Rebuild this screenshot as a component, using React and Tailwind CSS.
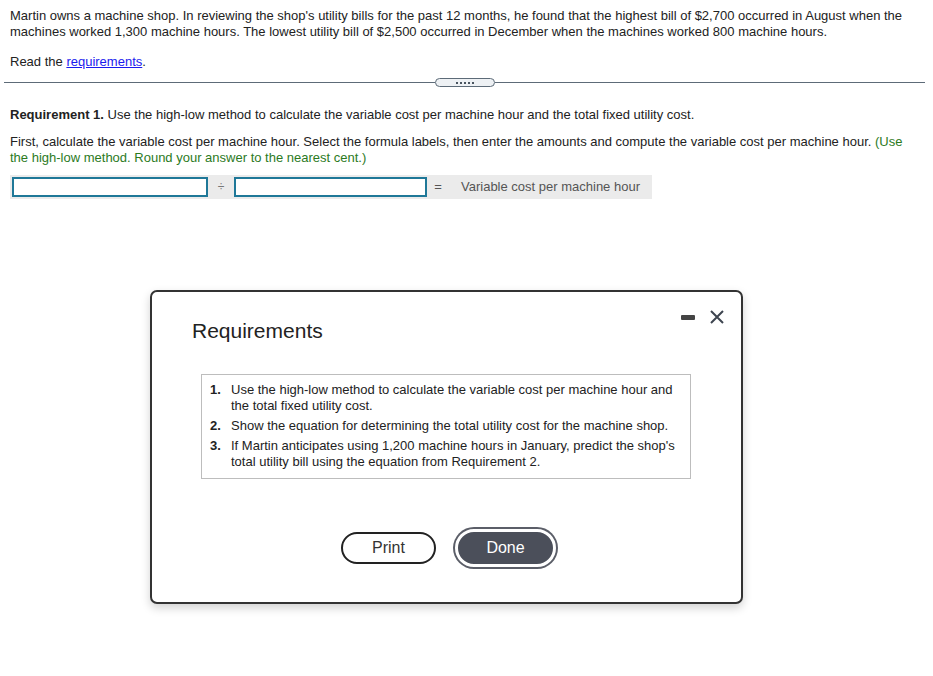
import React from 'react';

const font = { fontFamily: '"Liberation Sans", Arial, sans-serif' };

function Divider() {
    return (
        <div className="flex items-center pl-[4px] pr-[8px] mt-[8px]">
            <div className="flex-1 h-px bg-[#5d6b78]" />
            <div className="w-[60px] h-[9px] rounded-full border border-[#5d6b78] bg-[#eef1f4] flex items-center justify-center gap-[2px]">
                {[0, 1, 2, 3, 4].map((i) => (
                    <span key={i} className="w-[2px] h-[2px] bg-[#4a5560]" />
                ))}
            </div>
            <div className="flex-1 h-px bg-[#5d6b78]" />
        </div>
    );
}

function RequirementsModal() {
    return (
        <div className="absolute left-[150px] top-[290px] w-[593px] h-[314px] bg-white border-2 border-[#333] rounded-[7px] shadow-[0_4px_10px_rgba(0,0,0,0.18)]">
            <div className="absolute right-[16px] top-[17px] flex items-center gap-[14px]">
                <span className="w-[14px] h-[5px] rounded-[1px] bg-[#444]" />
                <svg width="16" height="16" viewBox="0 0 16 16">
                    <path d="M2 2 L14 14 M14 2 L2 14" stroke="#3e4550" strokeWidth="2" />
                </svg>
            </div>
            <div className="pl-[40px] pt-[27px]">
                <h2 className="text-[21px] leading-[24px] text-[#222]">Requirements</h2>
            </div>
            <div className="ml-[49px] mt-[31px] w-[490px] border border-[#bdbdbd] px-[8px] pt-[7px] pb-[8px]">
                <ol className="text-[13px] leading-[16px] text-[#222] space-y-[4px]">
                    <li className="flex">
                        <span className="w-[21px] font-bold">1.</span>
                        <span className="flex-1">Use the high-low method to calculate the variable cost per machine hour and the total fixed utility cost.</span>
                    </li>
                    <li className="flex">
                        <span className="w-[21px] font-bold">2.</span>
                        <span className="flex-1">Show the equation for determining the total utility cost for the machine shop.</span>
                    </li>
                    <li className="flex">
                        <span className="w-[21px] font-bold">3.</span>
                        <span className="flex-1">If Martin anticipates using 1,200 machine hours in January, predict the shop's total utility bill using the equation from Requirement 2.</span>
                    </li>
                </ol>
            </div>
            <div className="flex items-center justify-center gap-[19px] mt-[50px] pl-[4px]">
                <button className="w-[95px] h-[32px] rounded-full border-2 border-[#222] bg-white text-[16px] text-[#333]">
                    Print
                </button>
                <button className="w-[101px] h-[38px] rounded-full border-[3px] border-white bg-[#4b4f5a] text-[16px] text-white shadow-[0_0_0_2px_#5b5e68]">
                    Done
                </button>
            </div>
        </div>
    );
}

export default function App() {
    return (
        <div className="relative w-[933px] h-[676px] bg-white text-[13px] leading-[16px] text-[#222]" style={font}>
            <div className="px-[10px] pt-[8px]">
                <p className="pr-[20px]">
                    Martin owns a machine shop. In reviewing the shop's utility bills for the past 12 months, he found that the highest bill of $2,700 occurred in August when the machines worked 1,300 machine hours. The lowest utility bill of $2,500 occurred in December when the machines worked 800 machine hours.
                </p>
                <p className="mt-[14px]">
                    Read the <a href="#" className="text-[#1a1aee] underline">requirements</a>.
                </p>
            </div>

            <Divider />

            <div className="px-[10px] mt-[20px]">
                <p>
                    <span className="font-bold">Requirement 1.</span> Use the high-low method to calculate the variable cost per machine hour and the total fixed utility cost.
                </p>
                <p className="mt-[11px] pr-[20px]">
                    First, calculate the variable cost per machine hour. Select the formula labels, then enter the amounts and compute the variable cost per machine hour.{' '}
                    <span className="text-[#2c7a1e]">(Use the high-low method. Round your answer to the nearest cent.)</span>
                </p>
                <div className="mt-[9px] w-[642px] h-[24px] bg-[#ebebeb] flex items-center pl-[2px]">
                    <div className="w-[196px] h-[20px] border-2 border-[#1f7898] bg-white" />
                    <span className="w-[26px] text-center text-[#777] text-[12px]">÷</span>
                    <div className="w-[193px] h-[20px] border-2 border-[#1f7898] bg-white" />
                    <span className="w-[22px] text-center text-[#555]">=</span>
                    <span className="ml-[12px] whitespace-nowrap text-[#555] text-[13px]">Variable cost per machine hour</span>
                </div>
            </div>

            <RequirementsModal />
        </div>
    );
}
